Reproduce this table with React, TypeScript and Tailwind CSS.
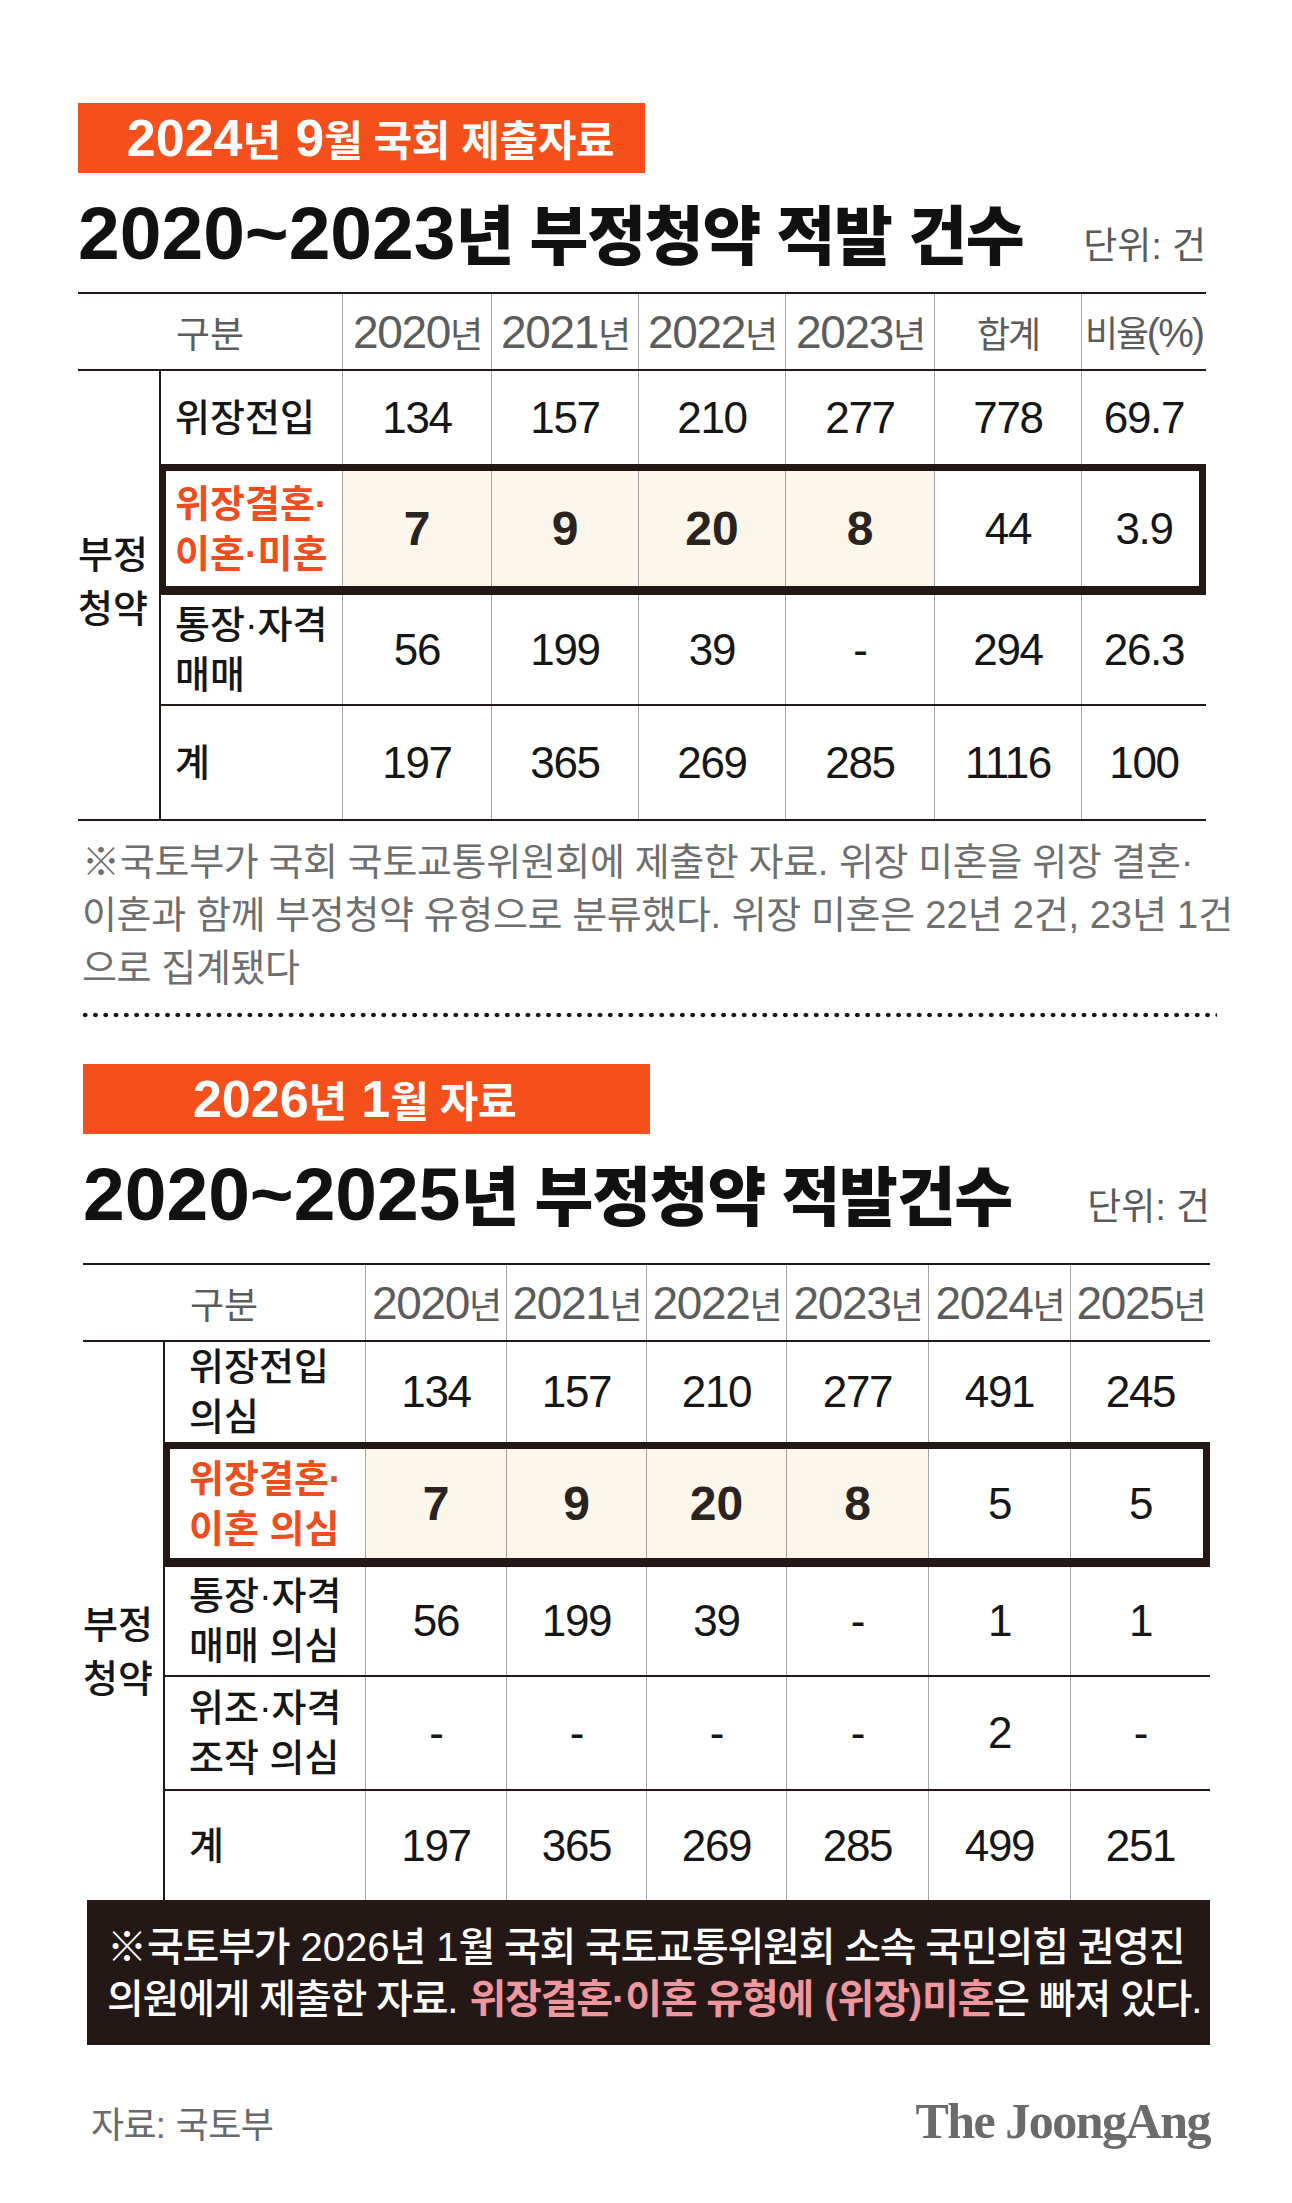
import type { ReactNode } from "react";

// 한글 구간(사이 공백 포함)과 숫자/기호 구간을 나눠서 각각 다른 크기·자간을 준다.
// 원본 서체가 한글은 좁고 숫자는 넓은 편이라 한 가지 크기로는 맞지 않음.
const KOR_RUN = /([\uAC00-\uD7A3](?:[\uAC00-\uD7A3\s]*[\uAC00-\uD7A3])?)/;

function Mix({ text, k, n }: { text: string; k: string; n: string }) {
  const parts = text.split(KOR_RUN).filter(Boolean);
  return (
    <span>
      {parts.map((s, i) =>
        /[\uAC00-\uD7A3]/.test(s) ? (
          <span key={i} className={k}>
            {s}
          </span>
        ) : (
          <span key={i} className={n}>
            {s}
          </span>
        ),
      )}
    </span>
  );
}

type Head = { t: string; n?: string };

type Row = {
  label: string[];
  values: string[];
  cls: string;
  hl?: boolean;
};

type TableProps = {
  head: Head[];
  headGrid: string;
  rowGrid: string;
  labelCol: string;
  labelPad: string;
  rows: Row[];
  bottomLine?: boolean;
};

const T1_HEAD: Head[] = [
  { t: "2020년" },
  { t: "2021년" },
  { t: "2022년" },
  { t: "2023년" },
  { t: "합계" },
  { t: "비율(%)", n: "text-[40px] tracking-[-0.05em]" },
];

const T2_HEAD: Head[] = [
  { t: "2020년" },
  { t: "2021년" },
  { t: "2022년" },
  { t: "2023년" },
  { t: "2024년" },
  { t: "2025년" },
];

const T1_ROWS: Row[] = [
  { label: ["위장전입"], values: ["134", "157", "210", "277", "778", "69.7"], cls: "h-[93px]" },
  {
    label: ["위장결혼·", "이혼·미혼"],
    values: ["7", "9", "20", "8", "44", "3.9"],
    cls: "h-[129px]",
    hl: true,
  },
  {
    label: ["통장·자격", "매매"],
    values: ["56", "199", "39", "-", "294", "26.3"],
    cls: "h-[111px] border-t-2",
  },
  { label: ["계"], values: ["197", "365", "269", "285", "1116", "100"], cls: "h-[115px] border-t-2" },
];

const T2_ROWS: Row[] = [
  {
    label: ["위장전입", "의심"],
    values: ["134", "157", "210", "277", "491", "245"],
    cls: "h-[100px]",
  },
  {
    label: ["위장결혼·", "이혼 의심"],
    values: ["7", "9", "20", "8", "5", "5"],
    cls: "h-[123px]",
    hl: true,
  },
  {
    label: ["통장·자격", "매매 의심"],
    values: ["56", "199", "39", "-", "1", "1"],
    cls: "h-[110px] border-t-2",
  },
  {
    label: ["위조·자격", "조작 의심"],
    values: ["-", "-", "-", "-", "2", "-"],
    cls: "h-[114px] border-t-2",
  },
  { label: ["계"], values: ["197", "365", "269", "285", "499", "251"], cls: "h-[111px] border-t-2" },
];

function Table({ head, headGrid, rowGrid, labelCol, labelPad, rows, bottomLine }: TableProps) {
  return (
    <div>
      <div
        className={`grid ${headGrid} h-[79px] border-y-2 border-[#231815] text-[46px] leading-[50px] text-[#5c5c5c] whitespace-nowrap`}
      >
        <div className="flex items-center justify-center">
          <Mix text="구분" k="text-[37px] leading-none" n="" />
        </div>
        {head.map((h) => (
          <div key={h.t} className="flex items-center justify-center border-l border-[#a3a3a3]">
            <Mix
              text={h.t}
              k="text-[36px] leading-none tracking-[-0.06em]"
              n={h.n ?? "leading-none tracking-[-0.03em]"}
            />
          </div>
        ))}
      </div>

      <div className="flex">
        <div className={`flex flex-col ${labelCol} text-[38px] font-medium leading-[54px]`}>
          <div>부정</div>
          <div>청약</div>
        </div>
        <div className="flex-1">
          {rows.map((r, ri) => (
            <div key={ri} className={`relative grid ${rowGrid} border-[#231815] ${r.cls}`}>
              <div
                className={`flex flex-col justify-center border-l-2 border-[#231815] ${labelPad} text-[38px] leading-[50px] whitespace-nowrap ${
                  r.hl ? "font-bold text-[#f04d1f]" : "font-medium"
                }`}
              >
                {r.label.map((l) => (
                  <div key={l}>
                    <Mix text={l} k="" n="" />
                  </div>
                ))}
              </div>
              {r.values.map((v, i) => {
                const strong = r.hl && i < 4;
                return (
                  <div
                    key={i}
                    className={`flex items-center justify-center border-l border-[#a3a3a3] ${
                      strong
                        ? "bg-[#fdf7eb] text-[48px] font-bold text-[#2a2320]"
                        : "text-[44px] tracking-[-0.03em]"
                    }`}
                  >
                    {v}
                  </div>
                );
              })}
              {r.hl ? (
                <div className="pointer-events-none absolute inset-0 border-[7px] border-[#231815]" />
              ) : null}
            </div>
          ))}
        </div>
      </div>
      {bottomLine ? <div className="h-[2px] bg-[#231815]" /> : null}
    </div>
  );
}

function Badge({ text, pad }: { text: string; pad: string }) {
  return (
    <div
      className={`flex h-[70px] w-[567px] items-center justify-center bg-[#f5501c] ${pad} text-[52px] font-bold leading-[70px] text-white whitespace-nowrap`}
    >
      <Mix text={text} k="text-[42px] leading-none tracking-[-0.01em]" n="leading-none" />
    </div>
  );
}

function Title({ text }: { text: string }): ReactNode {
  return (
    <div className="mt-[23px] flex h-[70px] items-baseline justify-between leading-[70px] whitespace-nowrap">
      <h1 className="text-[75px] font-black text-[#111]">
        <Mix text={text} k="text-[64px] leading-none tracking-[-0.02em]" n="leading-none" />
      </h1>
      <span className="text-[37px] leading-[40px] text-[#5a5a5a]">
        <Mix text="단위: 건" k="leading-none" n="leading-none" />
      </span>
    </div>
  );
}

export default function App() {
  return (
    <div className="relative h-[2203px] w-[1292px] overflow-hidden bg-white font-['Liberation_Sans','Noto_Sans_CJK_KR',sans-serif] text-[#161616]">
      <section className="ml-[78px] w-[1128px] pt-[103px]">
        <Badge text="2024년 9월 국회 제출자료" pad="pl-[18px]" />
        <Title text="2020~2023년 부정청약 적발 건수" />
        <div className="mt-[26px]">
          <Table
            head={T1_HEAD}
            headGrid="grid-cols-[264px_149px_147px_147px_149px_147px_125px]"
            rowGrid="grid-cols-[183px_149px_147px_147px_149px_147px_125px]"
            labelCol="w-[81px] justify-center pb-[26px]"
            labelPad="pl-[14px]"
            rows={T1_ROWS}
            bottomLine
          />
        </div>

        <div className="mt-[15px] pl-[4px] text-[38px] leading-[53px] text-[#6e6e6e] whitespace-nowrap">
          <div>
            <Mix
              text="※국토부가 국회 국토교통위원회에 제출한 자료. 위장 미혼을 위장 결혼·"
              k="tracking-[-0.01em]"
              n=""
            />
          </div>
          <div>
            <Mix
              text="이혼과 함께 부정청약 유형으로 분류했다. 위장 미혼은 22년 2건, 23년 1건"
              k="tracking-[-0.01em]"
              n=""
            />
          </div>
          <div>
            <Mix text="으로 집계됐다" k="tracking-[-0.01em]" n="" />
          </div>
        </div>

        <div className="ml-[2px] mt-[17px] h-[6px] w-[1137px] bg-[radial-gradient(circle,#161616_2px,transparent_2.6px)] bg-[length:10.3px_6px]" />
      </section>

      <section className="ml-[83px] mt-[46px] w-[1127px]">
        <Badge text="2026년 1월 자료" pad="pr-[24px]" />
        <Title text="2020~2025년 부정청약 적발건수" />
        <div className="mt-[36px]">
          <Table
            head={T2_HEAD}
            headGrid="grid-cols-[282px_141px_140px_140px_142px_142px_140px]"
            rowGrid="grid-cols-[202px_141px_140px_140px_142px_142px_140px]"
            labelCol="w-[80px] justify-center pt-[62px]"
            labelPad="pl-[24px]"
            rows={T2_ROWS}
          />
        </div>

        <div className="ml-[4px] flex h-[145px] flex-col justify-center bg-[#231815] pl-[20px] text-[40px] font-medium leading-[52px] text-white whitespace-nowrap">
          <div>
            <Mix
              text="※국토부가 2026년 1월 국회 국토교통위원회 소속 국민의힘 권영진"
              k="tracking-[-0.03em]"
              n=""
            />
          </div>
          <div>
            <Mix text="의원에게 제출한 자료. " k="tracking-[-0.03em]" n="" />
            <span className="font-bold text-[#f0969f]">
              <Mix text="위장결혼·이혼 유형에 (위장)미혼" k="tracking-[-0.03em]" n="" />
            </span>
            <Mix text="은 빠져 있다." k="tracking-[-0.03em]" n="" />
          </div>
        </div>

        <div className="mt-[52px] flex items-baseline justify-between pl-[8px] leading-[48px] whitespace-nowrap">
          <span className="text-[36px] text-[#6a6a6a]">
            <Mix text="자료: 국토부" k="tracking-[-0.02em]" n="" />
          </span>
          <span className="font-['Liberation_Serif',serif] text-[50px] font-bold tracking-[-0.03em] text-[#6b6b6b]">
            The JoongAng
          </span>
        </div>
      </section>
    </div>
  );
}
